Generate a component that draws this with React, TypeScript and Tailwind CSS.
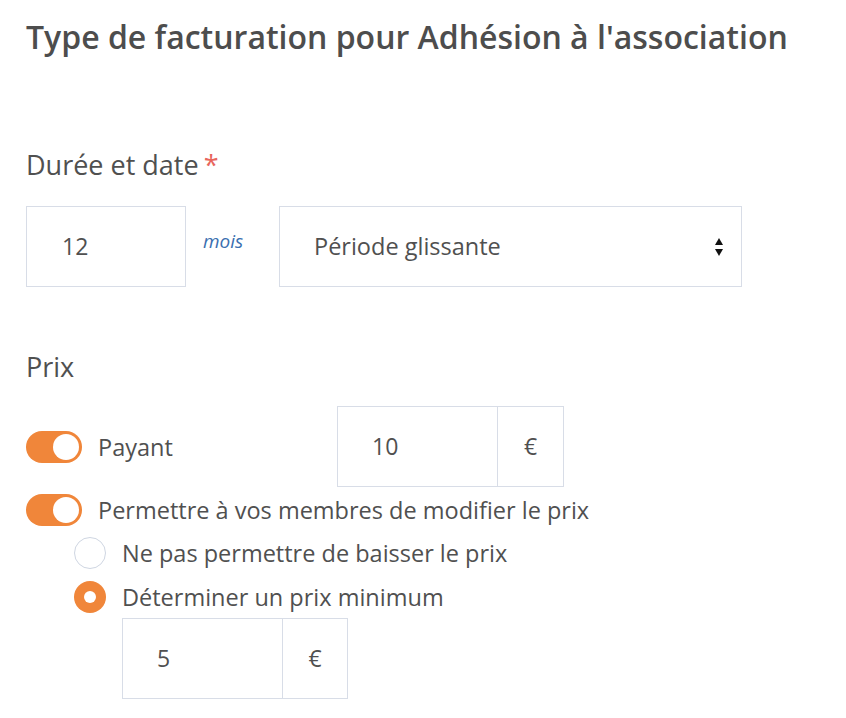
import React from 'react';

const Toggle: React.FC = () => (
  <div className="w-[56px] h-[32px] rounded-full bg-[#f0863a] flex items-center justify-end pr-[3px]">
    <div className="w-[26px] h-[26px] rounded-full bg-white" />
  </div>
);

const Radio: React.FC<{ checked?: boolean }> = ({ checked }) =>
  checked ? (
    <div className="w-[32px] h-[32px] rounded-full bg-[#f0863a] flex items-center justify-center">
      <div className="w-[12px] h-[12px] rounded-full bg-white" />
    </div>
  ) : (
    <div className="w-[32px] h-[32px] rounded-full border border-[#cfd6e2] bg-white" />
  );

const PriceInput: React.FC<{ value: string; w: string; wUnit: string }> = ({ value, w, wUnit }) => (
  <div className="flex h-[81px] border border-[#d8dde7]">
    <div className={`${w} flex items-center pl-[34px] text-[23px]`}>{value}</div>
    <div className={`${wUnit} border-l border-[#d8dde7] flex items-center justify-center text-[23px]`}>€</div>
  </div>
);

const App: React.FC = () => {
  return (
    <div className="min-h-screen bg-white text-[#505050] pl-[26px] pt-[17px]" style={{ fontFamily: '"Open Sans", Lato, sans-serif' }}>
      <h1 className="text-[32px] leading-[40px] font-semibold text-[#4d4d4d]">Type de facturation pour Adhésion à l'association</h1>

      <div className="mt-[91px] text-[27px] leading-[34px]">
        Durée et date<span className="text-[#e8655c] ml-[5px]">*</span>
      </div>

      <div className="mt-[24px] flex items-start">
        <div className="w-[160px] h-[81px] border border-[#d8dde7] flex items-center pl-[35px] text-[23px]">12</div>
        <div className="w-[93px] pl-[17px] pt-[21px] text-[19px] italic text-[#3b6fb0]">mois</div>
        <div className="w-[463px] h-[81px] border border-[#d8dde7] flex items-center justify-between pl-[34px] pr-[18px] text-[23.5px]">
          <span>Période glissante</span>
          <svg width="8" height="18" viewBox="0 0 8 18">
            <path d="M4 0 L8 7 L0 7 Z" fill="#111" />
            <path d="M4 18 L8 11 L0 11 Z" fill="#111" />
          </svg>
        </div>
      </div>

      <div className="mt-[63px] text-[27px] leading-[34px]">Prix</div>

      <div className="mt-[22px] flex items-center">
        <Toggle />
        <span className="ml-[16px] w-[239px] text-[23.5px] leading-[32px]">Payant</span>
        <PriceInput value="10" w="w-[159px]" wUnit="w-[66px]" />
      </div>

      <div className="mt-[7px] flex items-center">
        <Toggle />
        <span className="ml-[16px] text-[23.5px] leading-[32px]">Permettre à vos membres de modifier le prix</span>
      </div>

      <div className="ml-[48px]">
        <div className="mt-[11px] flex items-center">
          <Radio />
          <span className="ml-[16px] text-[23.5px] leading-[32px]">Ne pas permettre de baisser le prix</span>
        </div>
        <div className="mt-[12px] flex items-center">
          <Radio checked />
          <span className="ml-[16px] text-[23.5px] leading-[32px]">Déterminer un prix minimum</span>
        </div>
        <div className="mt-[5px] ml-[48px] w-fit">
          <PriceInput value="5" w="w-[159px]" wUnit="w-[65px]" />
        </div>
      </div>
    </div>
  );
};

export default App;
